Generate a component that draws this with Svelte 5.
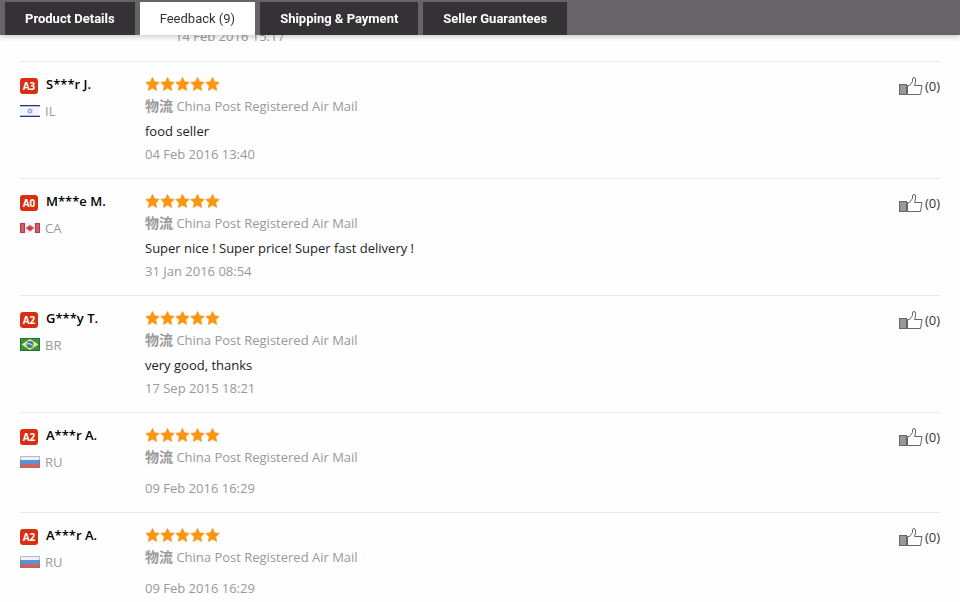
<script>
  let current = "feedback";

  const tabs = [
    { id: "details", label: "Product Details" },
    { id: "feedback", label: "Feedback (9)" },
    { id: "shipping", label: "Shipping & Payment" },
    { id: "guarantees", label: "Seller Guarantees" }
  ];

  let reviews = [
    { level: "A3", name: "S***r J.", country: "IL", text: "food seller", date: "04 Feb 2016 13:40", likes: 0 },
    { level: "A0", name: "M***e M.", country: "CA", text: "Super nice ! Super price! Super fast delivery !", date: "31 Jan 2016 08:54", likes: 0 },
    { level: "A2", name: "G***y T.", country: "BR", text: "very good, thanks", date: "17 Sep 2015 18:21", likes: 0 },
    { level: "A2", name: "A***r A.", country: "RU", text: "", date: "09 Feb 2016 16:29", likes: 0 },
    { level: "A2", name: "A***r A.", country: "RU", text: "", date: "09 Feb 2016 16:29", likes: 0 }
  ];

  function like(review) {
    review.likes += 1;
    reviews = reviews;
  }
</script>

<nav class="tabs">
  {#each tabs as tab}
    <button class="tab" class:active={tab.id === current} on:click={() => (current = tab.id)}>{tab.label}</button>
  {/each}
</nav>

<main class="feedback">
  <div class="reply">14 Feb 2016 15:17</div>

  {#each reviews as review}
    <article class="review">
      <div class="user">
        <div class="name"><span class="level">{review.level}</span>{review.name}</div>
        <div class="country">
          <svg class="flag" viewBox="0 0 20 14" aria-hidden="true">
            {#if review.country === "IL"}
              <rect y="1" width="20" height="12" fill="#f4f6fb" />
              <path d="M0 1.500h20M0 12.500h20" stroke="#2b3476" />
              <path d="M0 2.500h20M0 11.500h20" stroke="#b4bfe0" />
              <path d="M10 4.300l2.300 4H7.700zM10 9.700l-2.300-4h4.600z" fill="none" stroke="#7089c4" stroke-width=".6" />
            {:else if review.country === "CA"}
              <rect y="2" width="20" height="10" fill="#f8f2f2" />
              <path d="M0 2h5v10H0zM15 2h5v10h-5z" fill="#d85c68" />
              <path d="M.5 2.500h4v9h-4zM15.500 2.500h4v9h-4z" fill="none" stroke="#b23a48" />
              <path d="M10 3.500l1 1.700.9-.4-.2 1.500 1.600-.7v1l.9.5-2.700 2 .1.700-1.300-.2V11h-.6V9.600l-1.300.2.1-.7-2.700-2 .9-.5v-1l1.600.7-.2-1.500.9.4z" fill="#c2404c" />
            {:else if review.country === "BR"}
              <rect width="20" height="13" fill="#349640" />
              <path d="M.5.5h19v12H.5z" fill="none" stroke="#276e30" />
              <path d="M10 1l8.500 5.500L10 12 1.500 6.500z" fill="#e8ec78" />
              <circle cx="10" cy="6.500" r="3.500" fill="#4474ac" />
              <path d="M7 5.700q3.400-.6 6 2" fill="none" stroke="#e4eef2" />
            {:else}
              <rect y="1" width="20" height="4" fill="#eef1f5" />
              <rect y="5" width="20" height="4" fill="#5a94d4" />
              <rect y="9" width="20" height="4" fill="#d6605a" />
              <path d="M.5 1.500h19v11H.5z" fill="none" stroke="#67799a" stroke-opacity=".45" />
            {/if}
          </svg>
          {review.country}
        </div>
      </div>

      <div class="body">
        <div class="stars" role="img" aria-label="5 stars">
          {#each Array(5) as _}
            <svg viewBox="0 0 15 14" aria-hidden="true">
              <path d="M7.500.5l2 4.300 4.700.6-3.500 3.300.9 4.700-4.100-2.300-4.100 2.300.9-4.700L.8 5.400l4.700-.6z" fill="#fb9512" stroke="#fb9512" stroke-width=".8" stroke-linejoin="round" />
            </svg>
          {/each}
        </div>
        <div class="shipping"><b>物流</b> China Post Registered Air Mail</div>
        <p class="comment">{review.text}</p>
        <div class="date">{review.date}</div>
      </div>

      <button class="like" aria-label="Helpful ({review.likes})" on:click={() => like(review)}>
        <svg viewBox="0 0 24 19" aria-hidden="true">
          <path d="M8.500 8.500h2l3-4V2q.2-1.500 1.500-1.500T16.500 2v3L15.500 8.500h7.500L21.500 17.500h-13z" fill="#fff" stroke="#666" />
          <rect x=".5" y="7.500" width="7" height="10" fill="#999" stroke="#666" />
        </svg>
        <span>({review.likes})</span>
      </button>
    </article>
  {/each}
</main>

<style>
  :global(body) {
    margin: 0;
    background: #fefefe;
    overflow: hidden;
  }
  .tabs {
    position: fixed;
    top: 0;
    left: 0;
    right: 0;
    z-index: 10;
    display: flex;
    gap: 5px;
    padding: 2px 5px 0;
    background: #676467;
    box-shadow: 0 2px 5px rgba(0, 0, 0, 0.2);
  }
  .tab {
    height: 33px;
    padding: 0 20px;
    border: 0;
    background: #343235;
    color: #fff;
    font: 700 13px/33px Roboto, "Liberation Sans", sans-serif;
    cursor: pointer;
  }
  .tab.active {
    background: #fff;
    color: #333;
    font-weight: 400;
  }
  .feedback {
    padding: 24px 20px 0;
    color: #999;
    font: 13px/22px "Open Sans", "Noto Sans CJK SC", sans-serif;
  }
  .reply {
    padding: 0 0 13px 155px;
    line-height: 24px;
  }
  .review {
    display: flex;
    padding: 11px 0 12px;
    border-top: 1px solid #e8e8e8;
  }
  .user {
    width: 125px;
    flex: none;
  }
  .name {
    display: flex;
    align-items: center;
    gap: 8px;
    color: #000;
    font-weight: 600;
  }
  .level {
    width: 18px;
    height: 16px;
    margin-top: 3px;
    border-radius: 3px;
    background: #d92e0f;
    color: #fff;
    font-size: 10px;
    font-weight: 700;
    line-height: 16px;
    text-align: center;
  }
  .country {
    display: flex;
    align-items: center;
    gap: 5px;
    margin-top: 5px;
  }
  .flag {
    width: 20px;
    height: 14px;
  }
  .body {
    flex: 1;
    min-width: 0;
  }
  .stars {
    display: flex;
    align-items: center;
    height: 22px;
  }
  .stars svg {
    width: 15px;
    height: 14px;
  }
  .shipping b {
    font-size: 14px;
  }
  .comment {
    min-height: 5px;
    margin: 3px 0 0;
    color: #222;
  }
  .date {
    line-height: 24px;
  }
  .like {
    display: flex;
    align-items: center;
    align-self: flex-start;
    gap: 2px;
    margin-top: 2px;
    padding: 0;
    border: 0;
    background: none;
    color: #333;
    font: inherit;
    cursor: pointer;
  }
  .like svg {
    width: 24px;
    height: 19px;
  }
</style>
